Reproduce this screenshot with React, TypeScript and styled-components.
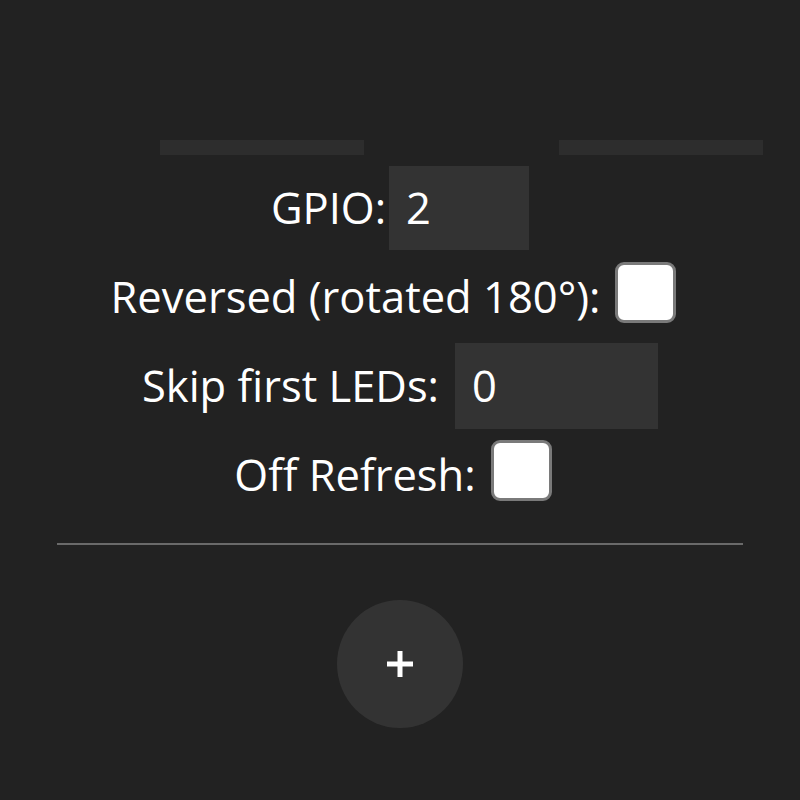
import React from "react";
import styled, { createGlobalStyle } from "styled-components";

const Global = createGlobalStyle`
  html, body { margin: 0; padding: 0; background: #222222; }
  body { font-family: "Open Sans", "Noto Sans", sans-serif; color: #ffffff; }
`;

const Page = styled.div`
  width: 800px;
  height: 800px;
  background: #222222;
  display: flex;
  flex-direction: column;
  align-items: center;
  overflow: hidden;
`;

const BarRow = styled.div`
  align-self: stretch;
  display: flex;
  padding-left: 160px;
  gap: 195px;
  margin-top: 140px;
`;

const Bar = styled.div`
  width: 204px;
  height: 15px;
  background: #2d2d2d;
`;

const Rows = styled.div`
  display: flex;
  flex-direction: column;
  margin-top: 8px;
`;

const Row = styled.div`
  height: 89px;
  display: flex;
  align-items: center;
  justify-content: center;
  font-size: 43.5px;
`;

const Label = styled.span<{ $gap: number }>`
  margin-right: ${(p) => p.$gap}px;
  white-space: nowrap;
`;

const NumInput = styled.div<{ $w: number; $h: number }>`
  width: ${(p) => p.$w}px;
  height: ${(p) => p.$h}px;
  background: #333333;
  display: flex;
  align-items: center;
  padding-left: 17px;
  box-sizing: border-box;
  font-size: 43.5px;
`;

const Check = styled.div`
  width: 61px;
  height: 61px;
  box-sizing: border-box;
  background: #ffffff;
  border: 3px solid #7a7a7a;
  border-radius: 9px;
  margin-bottom: 8px;
  margin-right: 14px;
`;

const Rule = styled.hr`
  width: 686px;
  height: 0;
  border: none;
  border-top: 2px solid #6a6a6a;
  margin: 24px 0 0 0;
`;

const AddButton = styled.div`
  margin-top: 55px;
  width: 126px;
  height: 128px;
  border-radius: 50%;
  background: #333333;
  display: flex;
  align-items: center;
  justify-content: center;
`;

export default function App() {
  return (
    <>
      <Global />
      <Page>
        <BarRow>
          <Bar />
          <Bar />
        </BarRow>
        <Rows>
          <Row>
            <Label $gap={3}>GPIO:</Label>
            <NumInput $w={140} $h={84}>2</NumInput>
          </Row>
          <Row>
            <Label $gap={14}>Reversed (rotated 180°):</Label>
            <Check />
          </Row>
          <Row>
            <Label $gap={16}>Skip first LEDs:</Label>
            <NumInput $w={203} $h={86}>0</NumInput>
          </Row>
          <Row>
            <Label $gap={15}>Off Refresh:</Label>
            <Check />
          </Row>
        </Rows>
        <Rule />
        <AddButton>
          <svg width="30" height="30" viewBox="0 0 30 30">
            <path d="M15 2v26M2 15h26" stroke="#ffffff" strokeWidth="5" />
          </svg>
        </AddButton>
      </Page>
    </>
  );
}
